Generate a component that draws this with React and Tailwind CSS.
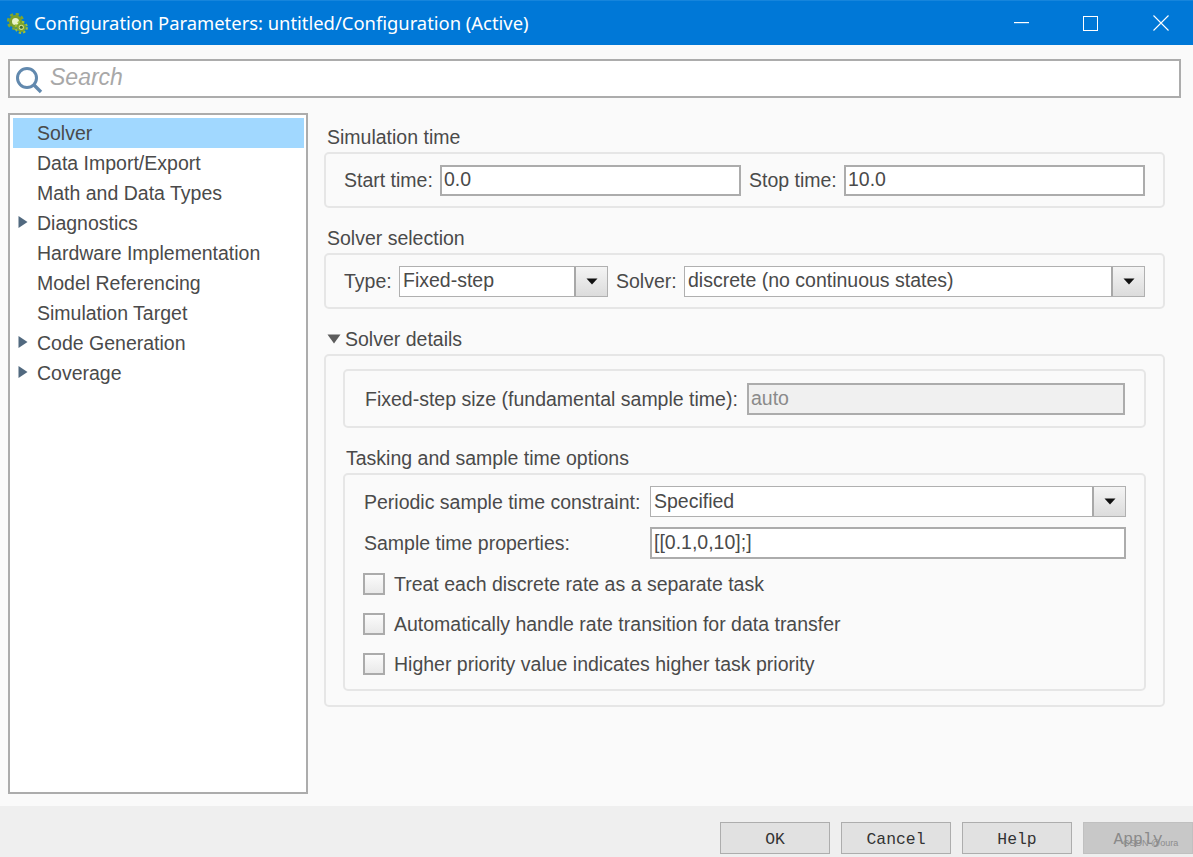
import React from "react";

const sans = "font-['Liberation_Sans',Arial,sans-serif]";

function Gear() {
  return (
    <svg width="21" height="21" viewBox="0 0 21 21" className="shrink-0">
      <g fill="none">
        <circle cx="8.5" cy="8.5" r="7.4" stroke="#7fa52e" strokeWidth="2.6" strokeDasharray="3.2 2.6" />
        <circle cx="8.5" cy="8.5" r="5" fill="#e9f2c8" stroke="#7a9f2a" strokeWidth="3" />
        <circle cx="14.3" cy="14.3" r="5.6" stroke="#a0c238" strokeWidth="2" strokeDasharray="2.4 2" />
        <circle cx="14.3" cy="14.3" r="3.6" fill="#cfe08a" stroke="#7fa52a" strokeWidth="2" />
        <circle cx="14.3" cy="14.3" r="1.5" fill="#3d6b2c" />
      </g>
    </svg>
  );
}

function TreeRow({ label, selected, arrow }) {
  return (
    <div className={`h-[30px] flex items-center pl-[24px] pt-[2px] relative text-[19.5px] text-[#4a4a4a] ${selected ? "bg-[#a1d8ff]" : ""}`}>
      {arrow && (
        <svg width="10" height="14" viewBox="0 0 10 14" className="absolute left-[5px] top-[7px]">
          <path d="M0.5 1 L9.5 7 L0.5 13 Z" fill="#51697f" />
        </svg>
      )}
      {label}
    </div>
  );
}

function Field({ value, className = "", disabled }) {
  return (
    <div className={`border-2 border-[#acacac] flex items-center pl-[2px] text-[19.5px] ${disabled ? "bg-[#f0f0f0] text-[#8a8a8a]" : "bg-white text-[#4a4a4a]"} ${className}`}>
      {value}
    </div>
  );
}

function Combo({ value, className = "" }) {
  return (
    <div className={`flex border border-[#b0b0b0] bg-white text-[19.5px] text-[#4a4a4a] ${className}`}>
      <div className="flex-1 flex items-center pl-[3px]">{value}</div>
      <div className="w-[33px] border-l-2 border-[#a8a8a8] bg-gradient-to-b from-[#f4f4f4] to-[#dcdcdc] flex items-center justify-center">
        <svg width="12" height="7" viewBox="0 0 12 7">
          <path d="M0.5 0.5 H11.5 L6 6.5 Z" fill="#111" />
        </svg>
      </div>
    </div>
  );
}

function GroupBox({ className = "", children }) {
  return <div className={`border-2 border-[#e6e6e6] rounded-[5px] ${className}`}>{children}</div>;
}

function CheckRow({ label }) {
  return (
    <div className="h-[40px] flex items-center gap-[9px] -ml-px text-[19.5px] text-[#4a4a4a]">
      <div className="w-[22px] h-[22px] border-2 border-[#ababab] bg-gradient-to-b from-[#fbfbfb] to-[#e9e9e9] shrink-0" />
      <span className="pt-[2px]">{label}</span>
    </div>
  );
}

function FooterButton({ label, disabled }) {
  return (
    <div className={`w-[110px] h-[32px] border flex items-center justify-center pt-[4px] text-[16.4px] font-['Liberation_Mono',monospace] ${disabled ? "border-[#c0c0c0] bg-[#c8c8c8] text-[#8a8a8a]" : "border-[#adadad] bg-[#e1e1e1] text-[#333333]"}`}>
      {label}
    </div>
  );
}

export default function App() {
  return (
    <div className={`relative w-[1193px] h-[857px] overflow-hidden flex flex-col bg-[#fafafa] ${sans}`}>
      {/* title bar */}
      <div className="h-[45px] bg-[#0078d7] border-t border-[#1685dc] flex items-center shrink-0 text-white">
        <div className="ml-[7px]"><Gear /></div>
        <div className="ml-[6px] text-[18.4px] font-['Noto_Sans',sans-serif] flex-1 whitespace-nowrap">
          Configuration Parameters: untitled/Configuration (Active)
        </div>
        <svg width="15" height="2" viewBox="0 0 15 2" className="mr-[54px]">
          <rect width="15" height="1.2" fill="#fff" />
        </svg>
        <svg width="15" height="15" viewBox="0 0 15 15" className="mr-[55px]">
          <rect x="0.5" y="0.5" width="14" height="14" fill="none" stroke="#fff" />
        </svg>
        <svg width="16" height="16" viewBox="0 0 16 16" className="mr-[24px]">
          <path d="M0.5 0.5 L15.5 15.5 M15.5 0.5 L0.5 15.5" stroke="#fff" strokeWidth="1.1" />
        </svg>
      </div>

      {/* search */}
      <div className="ml-[8px] mt-[14px] mr-[12px] h-[39px] border-2 border-[#acacac] bg-white flex items-center shrink-0">
        <svg width="28" height="28" viewBox="0 0 28 28" className="ml-[5px] mt-[2px]">
          <circle cx="12" cy="12" r="9.5" fill="none" stroke="#6289ae" strokeWidth="3" />
          <path d="M19 19 L26 26" stroke="#6289ae" strokeWidth="3.4" />
        </svg>
        <span className="ml-[7px] pb-[2px] text-[23px] italic text-[#a8a8a8]">Search</span>
      </div>

      {/* body */}
      <div className="flex-1 flex mt-[15px] min-h-0">
        <div className="ml-[8px] w-[300px] h-[681px] border-2 border-[#acacac] bg-white p-[3px] pr-[2px] shrink-0">
          <TreeRow label="Solver" selected />
          <TreeRow label="Data Import/Export" />
          <TreeRow label="Math and Data Types" />
          <TreeRow label="Diagnostics" arrow />
          <TreeRow label="Hardware Implementation" />
          <TreeRow label="Model Referencing" />
          <TreeRow label="Simulation Target" />
          <TreeRow label="Code Generation" arrow />
          <TreeRow label="Coverage" arrow />
        </div>

        <div className="ml-[16px] w-[841px] shrink-0 text-[19.5px] text-[#4a4a4a]">
          <div className="ml-[3px] h-[24px] mt-[12px] leading-[24px]">Simulation time</div>
          <GroupBox className="mt-[3px] h-[56px] flex items-center pl-[18px] pr-[18px]">
            <span className="w-[96px] shrink-0 pt-[2px]">Start time:</span>
            <Field value="0.0" className="w-[301px] h-[31px]" />
            <span className="ml-[8px] w-[95px] shrink-0 pt-[2px]">Stop time:</span>
            <Field value="10.0" className="flex-1 h-[31px]" />
          </GroupBox>

          <div className="ml-[3px] h-[24px] mt-[18px] leading-[24px]">Solver selection</div>
          <GroupBox className="mt-[3px] h-[56px] flex items-center pl-[18px] pr-[18px]">
            <span className="w-[55px] shrink-0 pt-[2px]">Type:</span>
            <Combo value="Fixed-step" className="w-[209px] h-[31px]" />
            <span className="ml-[8px] w-[68px] shrink-0 pt-[2px]">Solver:</span>
            <Combo value="discrete (no continuous states)" className="flex-1 h-[31px]" />
          </GroupBox>

          <div className="h-[24px] mt-[18px] leading-[24px] flex items-center">
            <svg width="14" height="10" viewBox="0 0 14 10" className="ml-[3px]">
              <path d="M0.5 0.5 H13.5 L7 9.5 Z" fill="#5c5c5c" />
            </svg>
            <span className="ml-[4px]">Solver details</span>
          </div>
          <GroupBox className="mt-[3px] h-[353px] pl-[17px] pr-[17px] pt-[13px]">
            <GroupBox className="h-[59px] flex items-center pl-[20px] pr-[19px]">
              <span className="w-[382px] shrink-0 pt-[2px]">Fixed-step size (fundamental sample time):</span>
              <Field value="auto" disabled className="flex-1 h-[32px]" />
            </GroupBox>
            <div className="ml-[3px] h-[24px] mt-[18px] leading-[24px]">Tasking and sample time options</div>
            <GroupBox className="mt-[3px] h-[218px] pl-[19px] pr-[18px] pt-[11px]">
              <div className="flex items-center h-[31px]">
                <span className="w-[286px] shrink-0 pt-[2px]">Periodic sample time constraint:</span>
                <Combo value="Specified" className="flex-1 h-[31px]" />
              </div>
              <div className="flex items-center h-[32px] mt-[10px]">
                <span className="w-[286px] shrink-0 pt-[2px]">Sample time properties:</span>
                <Field value="[[0.1,0,10];]" className="flex-1 h-[32px]" />
              </div>
              <div className="mt-[5px]">
                <CheckRow label="Treat each discrete rate as a separate task" />
                <CheckRow label="Automatically handle rate transition for data transfer" />
                <CheckRow label="Higher priority value indicates higher task priority" />
              </div>
            </GroupBox>
          </GroupBox>
        </div>
      </div>

      {/* footer */}
      <div className="h-[51px] bg-[#efefef] shrink-0 flex justify-end items-start pt-[16px] gap-[11px]">
        <FooterButton label="OK" />
        <FooterButton label="Cancel" />
        <FooterButton label="Help" />
        <FooterButton label="Apply" disabled />
      </div>
      <span className="absolute left-[1123px] top-[837px] text-[9px] text-[#8d8d8d]">CSDN @oura</span>
    </div>
  );
}
